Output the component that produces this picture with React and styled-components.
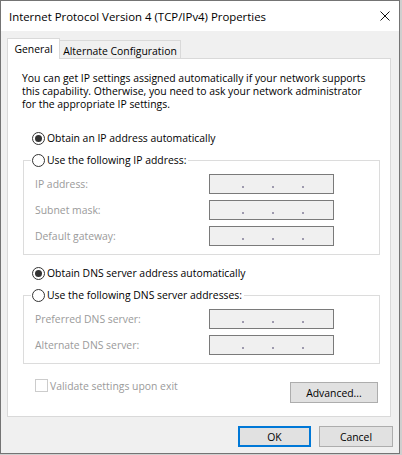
import React from "react";
import styled, { createGlobalStyle } from "styled-components";

const GlobalStyle = createGlobalStyle`
  html, body {
    margin: 0;
    padding: 0;
    background: #cfcfcf;
  }
  * {
    box-sizing: border-box;
  }
`;

const Window = styled.div`
  width: 400px;
  height: 454px;
  border: 1px solid #747474;
  background: #f0f0f0;
  display: flex;
  flex-direction: column;
  font-family: "Open Sans", "Noto Sans", sans-serif;
  font-size: 10.4px;
  color: #000;
`;

const TitleBar = styled.div`
  height: 30px;
  background: #fff;
  display: flex;
  align-items: center;
  padding: 0 9px 0 8px;
`;

const Title = styled.div`
  font-size: 11.4px;
  white-space: nowrap;
`;

const CloseIcon = styled.svg`
  margin-left: auto;
  display: block;
`;

const Body = styled.div`
  flex: 1;
  display: flex;
  flex-direction: column;
  padding: 7px 8px 0 6px;
`;

const TabRow = styled.div`
  display: flex;
  align-items: flex-end;
  height: 20px;
`;

const Tab = styled.div`
  position: relative;
  display: flex;
  align-items: center;
  justify-content: center;
  border: 1px solid #d9d9d9;
  border-bottom: none;
  white-space: nowrap;
  background: ${(p) => (p.$active ? "#fff" : "#f0f0f0")};
  width: ${(p) => p.$width}px;
  height: ${(p) => (p.$active ? 21 : 18)}px;
  margin-bottom: ${(p) => (p.$active ? -1 : 0)}px;
  margin-left: ${(p) => (p.$active ? 0 : -1)}px;
  z-index: ${(p) => (p.$active ? 1 : 0)};
  padding-top: ${(p) => (p.$active ? 0 : 2)}px;
`;

const Panel = styled.div`
  height: 359px;
  border: 1px solid #d9d9d9;
  background: #fff;
  display: flex;
  flex-direction: column;
  padding: 13px 10px 0 14px;
`;

const Intro = styled.p`
  margin: 0;
  line-height: 13px;
  white-space: nowrap;
`;

const RadioRow = styled.label`
  display: flex;
  align-items: center;
  height: 14px;
  margin-top: ${(p) => p.$top}px;
  margin-left: 10px;
  white-space: nowrap;
`;

const RadioCircle = styled.span`
  width: 13px;
  height: 13px;
  border-radius: 50%;
  border: 1px solid #333;
  background: #fff;
  display: flex;
  align-items: center;
  justify-content: center;
  margin-right: 2px;
  flex: none;
  &::after {
    content: "";
    width: 7px;
    height: 7px;
    border-radius: 50%;
    background: #333;
    display: ${(p) => (p.$checked ? "block" : "none")};
  }
`;

const Group = styled.fieldset`
  margin: 8px 0 0 1px;
  padding: 0;
  min-width: 0;
  border: 1px solid #dcdcdc;
`;

const Legend = styled.legend`
  margin-left: 7px;
  padding: 0 2px 0 1px;
  height: 14px;
`;

const LegendLabel = styled.span`
  display: flex;
  align-items: center;
  height: 14px;
  white-space: nowrap;
`;

const FieldGrid = styled.div`
  display: grid;
  grid-template-columns: 174px 125px;
  row-gap: 6px;
  padding: 7px 0 8px 11px;
`;

const FieldLabel = styled.span`
  color: #9a9a9a;
  display: flex;
  align-items: center;
  height: 20px;
  white-space: nowrap;
`;

const IpBox = styled.div`
  height: 20px;
  border: 1px solid #7a7a7a;
  background: #f0f0f0;
  display: flex;
  align-items: flex-end;
  gap: 28px;
  padding: 0 0 5px 32px;
`;

const IpDot = styled.span`
  width: 2px;
  height: 2px;
  background: #9e9aae;
`;

const BottomRow = styled.div`
  display: flex;
  align-items: flex-start;
  margin-top: 15px;
  padding-left: 13px;
`;

const CheckLabel = styled.label`
  display: flex;
  align-items: center;
  height: 13px;
  color: #9a9a9a;
  white-space: nowrap;
`;

const CheckBox = styled.span`
  width: 13px;
  height: 13px;
  border: 1px solid #cccccc;
  background: #fff;
  margin-right: 2px;
  flex: none;
`;

const Button = styled.button`
  font-family: "Open Sans", "Noto Sans", sans-serif;
  font-size: 10.4px;
  color: #000;
  height: 21px;
  width: ${(p) => p.$width}px;
  background: #e1e1e1;
  border: ${(p) => (p.$default ? "2px solid #0078d7" : "1px solid #adadad")};
  padding: 0;
  margin: 0;
  display: flex;
  align-items: center;
  justify-content: center;
`;

const AdvancedButton = styled(Button)`
  margin: 3px 2px 0 auto;
`;

const ButtonRow = styled.div`
  display: flex;
  justify-content: flex-end;
  gap: 8px;
  margin: 9px -2px 0 0;
`;

function Radio({ checked, children, top }) {
  return (
    <RadioRow $top={top}>
      <RadioCircle $checked={checked} />
      {children}
    </RadioRow>
  );
}

function IpField() {
  return (
    <IpBox>
      <IpDot />
      <IpDot />
      <IpDot />
    </IpBox>
  );
}

function AddressGroup({ legend, fields }) {
  return (
    <Group>
      <Legend>
        <LegendLabel>
          <RadioCircle />
          {legend}
        </LegendLabel>
      </Legend>
      <FieldGrid>
        {fields.map((f) => (
          <React.Fragment key={f}>
            <FieldLabel>{f}</FieldLabel>
            <IpField />
          </React.Fragment>
        ))}
      </FieldGrid>
    </Group>
  );
}

export default function App() {
  return (
    <>
      <GlobalStyle />
      <Window>
        <TitleBar>
          <Title>Internet Protocol Version 4 (TCP/IPv4) Properties</Title>
          <CloseIcon width="10" height="10" viewBox="0 0 10 10">
            <path d="M0.5 0.5 L9.5 9.5 M9.5 0.5 L0.5 9.5" stroke="#111" strokeWidth="1" fill="none" />
          </CloseIcon>
        </TitleBar>
        <Body>
          <TabRow>
            <Tab $active $width={53}>General</Tab>
            <Tab $width={122}>Alternate Configuration</Tab>
          </TabRow>
          <Panel>
            <Intro>
              You can get IP settings assigned automatically if your network supports
              <br />
              this capability. Otherwise, you need to ask your network administrator
              <br />
              for the appropriate IP settings.
            </Intro>
            <Radio checked top={20}>Obtain an IP address automatically</Radio>
            <AddressGroup
              legend="Use the following IP address:"
              fields={["IP address:", "Subnet mask:", "Default gateway:"]}
            />
            <Radio checked top={11}>Obtain DNS server address automatically</Radio>
            <AddressGroup
              legend="Use the following DNS server addresses:"
              fields={["Preferred DNS server:", "Alternate DNS server:"]}
            />
            <BottomRow>
              <CheckLabel>
                <CheckBox />
                Validate settings upon exit
              </CheckLabel>
              <AdvancedButton $width={88}>Advanced...</AdvancedButton>
            </BottomRow>
          </Panel>
          <ButtonRow>
            <Button $default $width={73}>OK</Button>
            <Button $width={74}>Cancel</Button>
          </ButtonRow>
        </Body>
      </Window>
    </>
  );
}
